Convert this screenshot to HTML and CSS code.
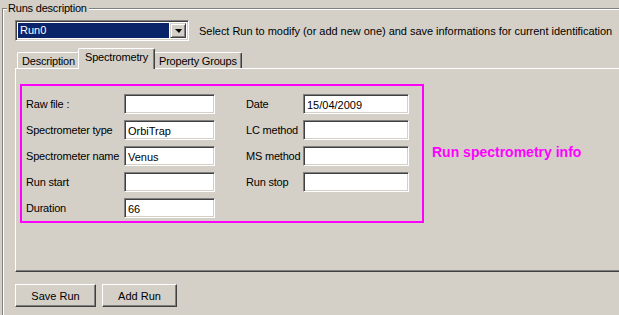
FILE: index.html
```html
<!DOCTYPE html>
<html>
<head>
<meta charset="utf-8">
<link rel="stylesheet" href="styles.css">
</head>
<body>
<div class="group">
  <span class="legend">Runs description</span>
  <div class="select-row">
    <div class="combo">
      <div class="combo-value"><span class="combo-sel">Run0</span></div>
      <div class="combo-btn"><span class="arrow"></span></div>
    </div>
    <span class="hint">Select Run to modify (or add new one) and save informations for current identification</span>
  </div>
  <div class="tabs">
    <div class="tab">Description</div>
    <div class="tab active">Spectrometry</div>
    <div class="tab">Property Groups</div>
  </div>
  <div class="panel">
    <div class="panel-row">
      <div class="info-box">
        <div class="col col-left">
          <label class="lbl">Raw file :</label><input class="field" value="">
          <label class="lbl">Spectrometer type</label><input class="field" value="OrbiTrap">
          <label class="lbl">Spectrometer name</label><input class="field" value="Venus">
          <label class="lbl">Run start</label><input class="field" value="">
          <label class="lbl">Duration</label><input class="field" value="66">
        </div>
        <div class="col col-right">
          <label class="lbl">Date</label><input class="field wide" value="15/04/2009">
          <label class="lbl">LC method</label><input class="field wide" value="">
          <label class="lbl">MS method</label><input class="field wide" value="">
          <label class="lbl">Run stop</label><input class="field wide" value="">
        </div>
      </div>
      <div class="note">Run spectrometry info</div>
    </div>
  </div>
  <div class="buttons">
    <button class="btn save">Save Run</button>
    <button class="btn add">Add Run</button>
  </div>
</div>
</body>
</html>
```
FILE: styles.css
```css
html, body {
  margin: 0;
  padding: 0;
  background: #d4d0c8;
  overflow: hidden;
}
body {
  width: 619px;
  height: 315px;
  font-family: "Liberation Sans", Arial, sans-serif;
  font-size: 11px;
  color: #000;
}
.group {
  position: relative;
  margin: 8px 0 0 2px;
  width: 617px;
  height: 307px;
  border-top: 1px solid #808080;
  border-left: 1px solid #808080;
  box-shadow: inset 1px 1px 0 #fff;
  padding: 11px 0 0 12px;
  box-sizing: border-box;
}
.legend {
  position: absolute;
  top: -8px;
  left: 4px;
  padding: 0 2px 0 1px;
  background: #d4d0c8;
  line-height: 14px;
  letter-spacing: -0.2px;
}
.select-row {
  display: flex;
  align-items: center;
  height: 21px;
}
.combo {
  width: 174px;
  height: 21px;
  box-sizing: border-box;
  border-top: 1px solid #808080;
  border-left: 1px solid #808080;
  border-right: 1px solid #fff;
  border-bottom: 1px solid #fff;
  box-shadow: inset 1px 1px 0 #404040, inset -1px -1px 0 #d4d0c8;
  background: #fff;
  display: flex;
  padding: 2px;
  flex: none;
}
.combo-value {
  flex: 1;
  display: flex;
  padding-right: 1px;
}
.combo-sel {
  flex: 1;
  background: #0a246a;
  color: #fff;
  line-height: 15px;
  padding-left: 2px;
}
.combo-btn {
  width: 16px;
  box-sizing: border-box;
  background: #d4d0c8;
  border-top: 1px solid #d4d0c8;
  border-left: 1px solid #d4d0c8;
  border-right: 1px solid #404040;
  border-bottom: 1px solid #404040;
  box-shadow: inset 1px 1px 0 #fff, inset -1px -1px 0 #808080;
  display: flex;
  align-items: center;
  justify-content: center;
}
.arrow {
  width: 0;
  height: 0;
  border-left: 4px solid transparent;
  border-right: 3px solid transparent;
  border-top: 4px solid #000;
  margin-top: 1px;
}
.hint {
  margin-left: 10px;
  white-space: nowrap;
  letter-spacing: -0.03px;
}
.tabs {
  display: flex;
  align-items: flex-end;
  margin-top: 7px;
  padding-left: 2px;
  height: 20px;
  position: relative;
  z-index: 1;
}
.tab {
  height: 16px;
  box-sizing: border-box;
  border-top: 1px solid #fff;
  border-left: 1px solid #fff;
  border-right: 1px solid #404040;
  box-shadow: inset -1px 0 0 #808080;
  border-radius: 2px 2px 0 0;
  padding: 1px 0 0 4px;
  line-height: 14px;
  white-space: nowrap;
  letter-spacing: -0.2px;
  flex: none;
}
.tab.active {
  margin: 0 -2px -1px -2px;
  padding: 1px 0 0 6px;
  background: #d4d0c8;
  position: relative;
  z-index: 2;
  height: 21px;
}
.tab:first-child { width: 63px; }
.tab.active { width: 77px; }
.tab:last-child { width: 89px; padding-left: 5px; }
.panel {
  height: 204px;
  box-sizing: border-box;
  border-top: 1px solid #fff;
  border-left: 1px solid #fff;
  border-bottom: 1px solid #404040;
  box-shadow: inset 0 -1px 0 #808080;
  padding: 15px 0 0 4px;
}
.panel-row {
  display: flex;
  align-items: center;
}
.info-box {
  width: 404px;
  height: 139px;
  box-sizing: border-box;
  border: 2px solid #ff00ff;
  padding: 8px 0 0 4px;
  display: flex;
  gap: 31px;
  flex: none;
}
.col {
  display: grid;
  grid-auto-rows: 20px;
  row-gap: 6px;
  align-items: center;
}
.col-left { grid-template-columns: 98px 91px; }
.col-right { grid-template-columns: 57px 106px; }
.lbl {
  white-space: nowrap;
  letter-spacing: -0.2px;
}
.field {
  height: 20px;
  box-sizing: border-box;
  margin: 0;
  border-top: 1px solid #808080;
  border-left: 1px solid #808080;
  border-right: 1px solid #fff;
  border-bottom: 1px solid #fff;
  box-shadow: inset 1px 1px 0 #404040, inset -1px -1px 0 #d4d0c8;
  background: #fff;
  font-family: inherit;
  font-size: 11px;
  padding: 1px 2px 0 3px;
  outline: none;
  color: #000;
}
.note {
  margin-left: 8px;
  color: #ff00ff;
  font-weight: bold;
  font-size: 14px;
  padding-bottom: 3px;
  white-space: nowrap;
}
.buttons {
  display: flex;
  gap: 6px;
  margin-top: 12px;
}
.btn {
  height: 23px;
  box-sizing: border-box;
  margin: 0;
  background: #d4d0c8;
  border-top: 1px solid #fff;
  border-left: 1px solid #fff;
  border-right: 1px solid #404040;
  border-bottom: 1px solid #404040;
  box-shadow: inset -1px -1px 0 #808080;
  font-family: inherit;
  font-size: 11px;
  color: #000;
  padding: 0;
}
.btn.save { width: 81px; }
.btn.add { width: 75px; }
```
